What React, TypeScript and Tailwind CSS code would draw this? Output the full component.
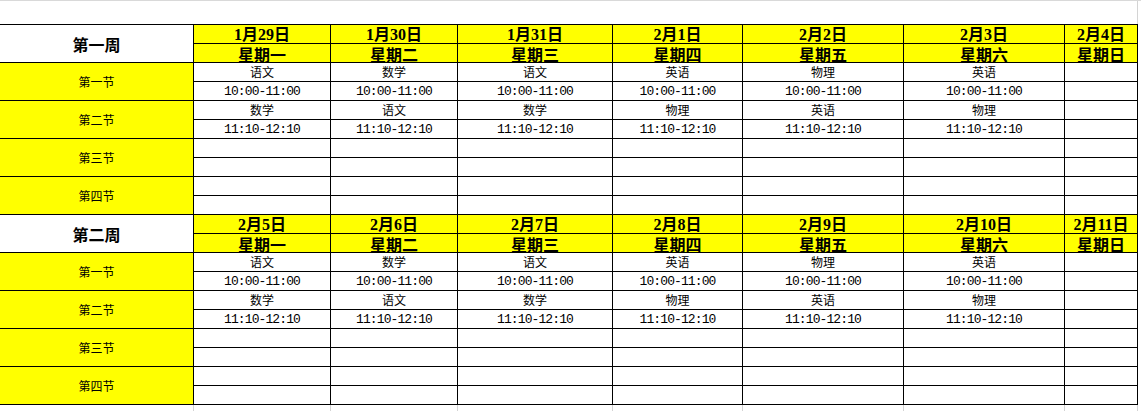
import type { ReactNode } from "react";

type Period = {
  label: string;
  courses: string[];
  time: string;
};

type Week = {
  title: string;
  dates: string[];
};

const WEEKDAYS = ["星期一", "星期二", "星期三", "星期四", "星期五", "星期六", "星期日"];

const PERIODS: Period[] = [
  {
    label: "第一节",
    courses: ["语文", "数学", "语文", "英语", "物理", "英语", ""],
    time: "10:00-11:00",
  },
  {
    label: "第二节",
    courses: ["数学", "语文", "数学", "物理", "英语", "物理", ""],
    time: "11:10-12:10",
  },
  { label: "第三节", courses: ["", "", "", "", "", "", ""], time: "" },
  { label: "第四节", courses: ["", "", "", "", "", "", ""], time: "" },
];

const WEEKS: Week[] = [
  {
    title: "第一周",
    dates: ["1月29日", "1月30日", "1月31日", "2月1日", "2月2日", "2月3日", "2月4日"],
  },
  {
    title: "第二周",
    dates: ["2月5日", "2月6日", "2月7日", "2月8日", "2月9日", "2月10日", "2月11日"],
  },
];

const GRID =
  "grid grid-cols-[194px_137px_127px_155px_130px_161px_161px_73px] auto-rows-[19px]";

function Cell({
  col,
  className = "",
  children,
}: {
  col: number;
  className?: string;
  children?: ReactNode;
}) {
  const edge = col === 7 ? "border-r-[#d4d4d4]" : "border-r-black";
  return (
    <div
      className={`flex justify-center border-b border-r border-b-black ${edge} ${className}`}
    >
      {children}
    </div>
  );
}

function WeekBlock({ week }: { week: Week }) {
  return (
    <>
      <div className="row-span-2 flex items-center justify-center border-b border-r border-black bg-white font-['Noto_Sans_CJK_SC',sans-serif] text-[16px] font-bold leading-none text-black">
        {week.title}
      </div>
      {week.dates.map((d, i) => (
        <Cell
          key={d}
          col={i}
          className="items-end bg-[#ffff00] font-['Liberation_Serif','Noto_Sans_CJK_SC',serif] text-[16px] font-bold leading-[16px]"
        >
          {d}
        </Cell>
      ))}
      {WEEKDAYS.map((w, i) => (
        <Cell
          key={w}
          col={i}
          className="items-end bg-[#ffff00] font-['Noto_Sans_CJK_SC',sans-serif] text-[16px] font-bold leading-[16px]"
        >
          {w}
        </Cell>
      ))}
      {PERIODS.map((p) => (
        <PeriodRows key={p.label} period={p} />
      ))}
    </>
  );
}

function PeriodRows({ period }: { period: Period }) {
  return (
    <>
      <div className="row-span-2 flex items-center justify-center border-b border-r border-black bg-[#ffff00] font-['Noto_Sans_CJK_SC',sans-serif] text-[12px] leading-none">
        {period.label}
      </div>
      {period.courses.map((c, i) => (
        <Cell
          key={`c${i}`}
          col={i}
          className="items-center bg-white font-['Noto_Sans_CJK_SC',sans-serif] text-[12px] leading-none"
        >
          {c}
        </Cell>
      ))}
      {period.courses.map((c, i) => (
        <Cell
          key={`t${i}`}
          col={i}
          className="items-center bg-white pt-px font-['Liberation_Mono',monospace] text-[13px] leading-none tracking-[-0.9px]"
        >
          {c ? period.time : ""}
        </Cell>
      ))}
    </>
  );
}

export default function App() {
  return (
    <div className="h-[411px] w-[1141px] overflow-hidden bg-white text-black">
      <div className="h-px w-full bg-[#d9d9d9]" />
      <div className="flex h-[23px]">
        <div className="w-[1137px]" />
        <div className="h-full w-px bg-[#d4d4d4]" />
      </div>
      <div className={`${GRID} w-[1138px] border-t border-black`}>
        {WEEKS.map((w) => (
          <WeekBlock key={w.title} week={w} />
        ))}
        {Array.from({ length: 8 }).map((_, i) => (
          <div key={i} className="border-r border-[#d4d4d4]" />
        ))}
      </div>
    </div>
  );
}
